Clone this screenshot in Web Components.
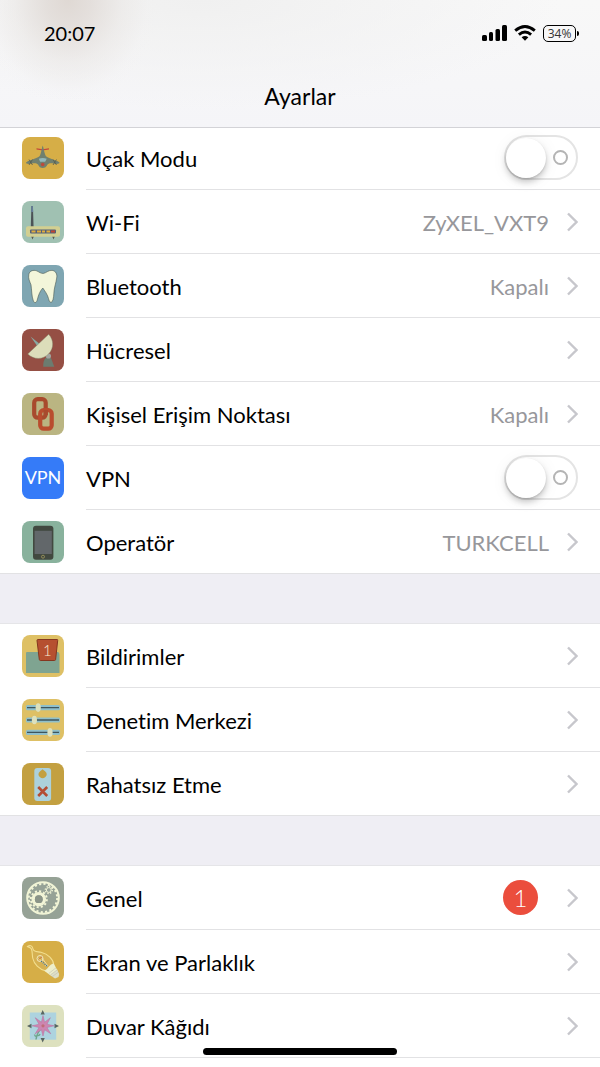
<!DOCTYPE html>
<html lang="tr">
<head>
<meta charset="utf-8">
<meta name="viewport" content="width=device-width, initial-scale=1">
<title>Ayarlar</title>
<style>
  body {
    margin: 0;
    background: #fff;
    font-family: Lato, "Open Sans", sans-serif;
    font-variant-ligatures: none;
    color: #000;
  }
</style>
</head>
<body>
<settings-page>
  <status-bar slot="header" time="20:07" battery="34"></status-bar>
  <span slot="title">Ayarlar</span>

  <settings-group>
    <switch-row icon="plane">Uçak Modu</switch-row>
    <link-row icon="router" value="ZyXEL_VXT9">Wi-Fi</link-row>
    <link-row icon="tooth" value="Kapalı">Bluetooth</link-row>
    <link-row icon="dish">Hücresel</link-row>
    <link-row icon="chain" value="Kapalı">Kişisel Erişim Noktası</link-row>
    <switch-row icon="vpn">VPN</switch-row>
    <link-row icon="phone" value="TURKCELL">Operatör</link-row>
  </settings-group>

  <settings-group>
    <link-row icon="notifications">Bildirimler</link-row>
    <link-row icon="sliders">Denetim Merkezi</link-row>
    <link-row icon="hanger">Rahatsız Etme</link-row>
  </settings-group>

  <settings-group continues>
    <link-row icon="gears" badge="1">Genel</link-row>
    <link-row icon="bulb">Ekran ve Parlaklık</link-row>
    <link-row icon="flower">Duvar Kâğıdı</link-row>
  </settings-group>
</settings-page>

<script>
const ICONS = {
  plane: `
    <rect width="42" height="42" fill="#d6ae47"/>
    <path d="M14.5 11.3 20.7 12.2 27 11.3 27 12.4 20.7 13.6 14.5 12.4Z" fill="#c4473a"/>
    <path d="M20.7 8.5C21.8 11 22 15 23.5 18.5 26 22 33 22 37.5 25.5 37.5 27 35 27.2 32 26.6 29 26 27 26 25.5 27.5 24.5 30 22.8 31 20.7 31 18.6 31 17 30 16 27.5 14.5 26 12.5 26 9.5 26.6 6.5 27.2 4 27 4 25.5 8.5 22 15.5 22 18 18.5 19.5 15 19.6 11 20.7 8.5Z" fill="#70806f"/>
    <path d="M16.8 21.8Q20.7 20 24.7 21.8L23.2 24.7H18.2Z" fill="#91b8bd"/>
    <circle cx="20.7" cy="27.5" r="1.8" fill="#bd493a"/>
    <path d="M7 22.5 10.5 28M10.5 22.5 7 28M31 22.5 34.5 28M34.5 22.5 31 28" stroke="#555b4e" stroke-width=".8"/>`,
  router: `
    <rect width="42" height="42" fill="#a0c1b2"/>
    <path d="M9.4 5h1.5l.7 21H8.8Z" fill="#4c5356"/>
    <path d="M9.4 5h1.5l.3 6h-2Z" fill="#647d98"/>
    <path d="M9 35h3l-1.5 3.5ZM30 35h3l-1.5 3.5Z" fill="#56584c"/>
    <rect x="4" y="25.3" width="34" height="10.5" rx="2" fill="#d2cf91"/>
    <rect x="8" y="28.5" width="26" height="4" rx="1" fill="#53607a"/>
    <path d="M9.5 30.5h4M15 30.5h4M20 30.5h3M24.5 30.5h3.5" stroke="#e2ae3c" stroke-width="2"/>
    <path d="M29 30.5h4" stroke="#c2452f" stroke-width="2"/>`,
  tooth: `
    <rect width="42" height="42" fill="#7fa6b2"/>
    <path d="M6.8 9.5C7.5 5.5 11.5 4.8 14.5 5.8 17 6.8 19 8.8 21.5 8.4 24 8 26.5 5 30.2 5.4 33.5 5.8 35.5 9 34.7 13 34 17.5 32.8 21 32.2 25 31.6 29 32 34 30 36.8 28.4 38.5 27 36 26.5 33.5 25.5 29.5 22.8 26 20.8 23 18 26 16.5 30 15.5 34 14.8 37.5 12.8 39 11.4 36 9.5 31 9.8 25 9 19.8 7.8 16.5 6 13.5 6.8 9.5Z" fill="#f3f6da" stroke="#4c5a52" stroke-width=".6"/>`,
  dish: `
    <rect width="42" height="42" fill="#954f44"/>
    <path d="M8.5 7.5 17.8 15 15.6 17.5Z" fill="#88aaa3"/>
    <path d="M23.5 29H29L32.3 37.7H21.2Q21 32 23.5 29Z" fill="#6c7c70"/>
    <circle cx="26.4" cy="27" r="2.6" fill="#a3a6a1"/>
    <path d="M26.7 5.3C32 11 32 19 27 24.5 21 31 12 31 5.7 25Z" fill="#dcddba" stroke="#77765d" stroke-width=".4"/>`,
  chain: `
    <rect width="42" height="42" fill="#bab582"/>
    <g fill="none" stroke-width="4.2">
      <rect x="12.2" y="6.2" width="11.5" height="18.5" rx="3.5" stroke="#a84a2d"/>
      <rect x="18.2" y="17.2" width="11.5" height="18.5" rx="3.5" stroke="#b94d2e"/>
      <path d="M23.7 17v5" stroke="#a84a2d"/>
    </g>`,
  vpn: `
    <rect width="42" height="42" fill="#357bf8"/>
    <text x="21" y="27" font-size="18" text-anchor="middle" fill="#fff">VPN</text>`,
  phone: `
    <rect width="42" height="42" fill="#89b29d"/>
    <rect x="11" y="4.8" width="20.4" height="34" rx="3" fill="#424940"/>
    <rect x="12.6" y="9.8" width="17.2" height="23.2" fill="#62676a"/>
    <circle cx="21" cy="35.7" r="1.5" fill="none" stroke="#a39c60" stroke-width=".8"/>`,
  notifications: `
    <rect width="42" height="42" fill="#dec065"/>
    <path d="M4 18Q4 17 5 17H36Q37.5 17.5 37.5 20V38H4Z" fill="#7fa491"/>
    <path d="M15.8 4.5H35.4Q35.8 4.5 35.7 5.5L33.6 24.5Q33.4 25.5 32.5 25.5H18.4Q17.5 25.5 17.3 24.5L15 5.5Q15 4.5 15.8 4.5Z" fill="#b65030" stroke="#85361f" stroke-width="1"/>
    <text x="25.3" y="20.5" font-size="15" font-weight="300" text-anchor="middle" fill="#f8ead2">1</text>`,
  sliders: `
    <rect width="42" height="42" fill="#dec065"/>
    <g fill="#8ebfca">
      <rect x="4" y="6" width="34" height="5.2" rx="1.5"/>
      <rect x="4" y="18.4" width="34" height="5.2" rx="1.5"/>
      <rect x="4" y="30.8" width="34" height="5.2" rx="1.5"/>
    </g>
    <path d="M5 8.6H37M5 21H37M5 33.4H37" stroke="#3e555c" stroke-width="1.3"/>
    <g fill="#dde1bd">
      <ellipse cx="16.2" cy="8.6" rx="2.6" ry="4.3"/>
      <ellipse cx="12.4" cy="21" rx="2.6" ry="4.3"/>
      <ellipse cx="28" cy="33.4" rx="2.6" ry="4.3"/>
    </g>`,
  hanger: `
    <rect width="42" height="42" fill="#c3a041"/>
    <rect x="12.3" y="5" width="16.8" height="33" rx="3" fill="#acd1dc"/>
    <path d="M20.6 6.2 23.3 8.4A3.9 3.9 0 1 1 17.9 8.4Z" fill="#c3a041"/>
    <path d="M16.2 24 25.2 33M25.2 24 16.2 33" stroke="#b44e34" stroke-width="2.6"/>`,
  gears: `
    <rect width="42" height="42" fill="#96a296"/>
    <g fill="none" stroke="#f1f4d6">
      <circle cx="21" cy="21" r="15.8" stroke-width="2"/>
      <circle cx="21" cy="21" r="14.2" stroke-width="2" stroke-dasharray="2.2 2.26"/>
      <circle cx="16.8" cy="22.2" r="5.6" stroke-width="3.4"/>
      <circle cx="16.8" cy="22.2" r="8" stroke-width="2" stroke-dasharray="2.1 2.09"/>
      <circle cx="26.8" cy="13" r="2.4" stroke-width="1"/>
      <circle cx="26.8" cy="13" r="3.5" stroke-width="1.4" stroke-dasharray="1.3 1.45"/>
    </g>
    <circle cx="16.8" cy="22.2" r="3.9" fill="#8a9488"/>`,
  bulb: `
    <rect width="42" height="42" fill="#d6ae47"/>
    <path d="M5.5 5.5C8.5 3.5 10.5 5 11 8 11.5 11 15 10.5 19 11.2 26 13 31.5 18 31.7 24L24 30C17 28.5 12 23 10.7 17 10 13 10.5 10.5 9.4 8 8.5 6.3 7 6.5 5.5 5.5Z" fill="#d6b152" stroke="#f3df8f" stroke-width="1.1"/>
    <circle cx="18" cy="17.5" r="3" fill="none" stroke="#f1e6bd" stroke-width="1"/>
    <path d="M16.5 17 25 26M19.5 16.5 26 25" stroke="#f0e7c2" stroke-width=".8"/>
    <path d="M19 20 25.5 25.5" stroke="#4e7484" stroke-width="1.2" stroke-dasharray="1.4 .8"/>
    <path d="M17 18l3-2" stroke="#cb754a" stroke-width="1"/>
    <path d="M31.7 22.4 35.5 29.5 28.5 34.5 22.3 29.8Q24.8 28.8 27 25.5Q28.7 22.8 31.7 22.4Z" fill="#eeeecb"/>
    <path d="M35 28.6 37.2 33 36.5 36 33 37.5 28.5 34.5Z" fill="#dedfc8"/>
    <path d="M26.8 32.5 34 26.8M28.3 34 35.4 28.8M30 35.8 36.3 31.2" stroke="#c5c5b4" stroke-width=".7"/>`,
  flower: `
    <rect width="42" height="42" fill="#dde1bf"/>
    <rect x="7.8" y="7.5" width="26.4" height="27.2" fill="#add3df"/>
    <path d="M20.7 5 22.8 9.5H18.6ZM20.7 37.5 22.8 33H18.6ZM5 21 9.5 18.8V23.2ZM37 21 32.5 18.8V23.2Z" fill="#596661"/>
    <path d="M20.5 22Q15 27 14 34.5M14.6 31.5Q12.8 31.5 12.5 29.5M15.3 30.5Q17.5 31 18 29" stroke="#6fa58c" stroke-width="1.4" fill="none"/>
    <path d="M21 10.5 22.6 17.2 28.4 12.7 25 19.2 32 20.8 25 22.5 28.8 28.8 22.6 24.8 21 31 19.4 24.8 13.2 28.8 17 22.5 10 20.8 17 19.2 13.2 12.7 19.4 17.2Z" fill="#cd86b1" stroke="#b76f9e" stroke-width=".5"/>
    <circle cx="21" cy="20.8" r="1.6" fill="#c06d79"/>`,
};

class AppIcon extends HTMLElement {
  connectedCallback() {
    this.attachShadow({ mode: 'open' }).innerHTML = `
      <style>
        :host { display: block; flex: none; width: 42px; height: 42px; border-radius: 8px; overflow: hidden; }
        svg { display: block; width: 100%; height: 100%; font-family: Lato, sans-serif; }
      </style>
      <svg viewBox="0 0 42 42" aria-hidden="true">${ICONS[this.getAttribute('name')] || ''}</svg>
    `;
  }
}

class StatusBar extends HTMLElement {
  connectedCallback() {
    this.attachShadow({ mode: 'open' }).innerHTML = `
      <style>
        :host {
          display: flex;
          align-items: center;
          justify-content: space-between;
          height: 66px;
          padding: 0 21px 0 44px;
          font-size: 20px;
        }
        .indicators { display: flex; align-items: center; gap: 7px; }
        .battery { display: flex; align-items: center; gap: 1px; }
        .level {
          box-sizing: border-box;
          width: 33px;
          height: 17px;
          border: 1px solid #000;
          border-radius: 5px;
          font-family: "Open Sans", sans-serif;
          font-size: 12px;
          line-height: 15px;
          text-align: center;
          color: #333;
        }
        .cap { width: 2px; height: 5px; border-radius: 0 2px 2px 0; background: #000; }
        svg { display: block; }
      </style>
      <time>${this.getAttribute('time')}</time>
      <div class="indicators">
        <svg width="25" height="16" viewBox="0 0 25 16" aria-hidden="true">
          <rect y="10" width="5" height="6" rx="1.5"/>
          <rect x="7" y="7" width="4" height="9" rx="1.5"/>
          <rect x="13.5" y="4" width="4.5" height="12" rx="1.5"/>
          <rect x="20" y="0" width="5" height="16" rx="1.5"/>
        </svg>
        <svg width="22" height="16" viewBox="0 0 22 16" aria-hidden="true">
          <path d="M1.2 5.6Q11-2.6 20.8 5.6M4.9 9.6Q11 4.4 17.1 9.6" fill="none" stroke="#000" stroke-width="2.9"/>
          <path d="M7.6 12.3Q11 9.7 14.4 12.3L11 15.8Z"/>
        </svg>
        <div class="battery"><div class="level">${this.getAttribute('battery')}%</div><div class="cap"></div></div>
      </div>
    `;
  }
}

class SettingsPage extends HTMLElement {
  connectedCallback() {
    this.attachShadow({ mode: 'open' }).innerHTML = `
      <style>
        :host { display: block; }
        header {
          position: sticky;
          top: 0;
          z-index: 1;
          box-sizing: border-box;
          height: 128px;
          border-bottom: 1px solid #d3d3d7;
          background:
            radial-gradient(ellipse 90px 105px at 68px 0, rgba(222, 215, 210, 0.95), rgba(224, 218, 214, 0.8) 25%, rgba(230, 226, 223, 0.4) 60%, rgba(240, 238, 238, 0.1) 88%, rgba(245, 245, 246, 0)),
            radial-gradient(ellipse 360px 110px at 200px 0, #f0f0f0, rgba(245, 245, 246, 0)),
            linear-gradient(#f8f8f8, #f5f5f8);
        }
        h1 {
          margin: 0;
          font-size: 23px;
          font-weight: 400;
          line-height: 60px;
          text-align: center;
        }
        /* the first group starts just under the bar's edge */
        main { display: flex; flex-direction: column; gap: 50px; margin-top: -2px; background: #efeef4; }
        .home {
          position: fixed;
          bottom: 12px;
          left: 50%;
          width: 194px;
          height: 7px;
          margin-left: -97px;
          border-radius: 4px;
          background: #000;
        }
      </style>
      <header>
        <slot name="header"></slot>
        <h1><slot name="title"></slot></h1>
      </header>
      <main><slot></slot></main>
      <div class="home"></div>
    `;
  }
}

class SettingsGroup extends HTMLElement {
  connectedCallback() {
    this.attachShadow({ mode: 'open' }).innerHTML = `
      <style>
        :host { display: block; background: #fff; box-shadow: 0 -1px #e5e5e8; }
        :host(:not([continues])) ::slotted(:last-child) { --line-inset: 0; }
      </style>
      <slot></slot>
    `;
  }
}

const ROW_STYLE = `
  :host { display: block; }
  .row {
    display: flex;
    align-items: center;
    height: 63px;
    padding: 0 22px;
    font-size: 22px;
    color: inherit;
    text-decoration: none;
  }
  .line { height: 1px; margin-left: var(--line-inset, 86px); background: #e2e2e4; }
  .label { flex: 1; padding: 2px 0 0 22px; }
`;

class LinkRow extends HTMLElement {
  connectedCallback() {
    const value = this.getAttribute('value');
    const badge = this.getAttribute('badge');
    this.attachShadow({ mode: 'open' }).innerHTML = `
      <style>
        ${ROW_STYLE}
        .value { padding-top: 2px; color: #97979b; }
        .badge {
          width: 35px;
          height: 35px;
          margin-right: 11px;
          border-radius: 50%;
          background: #eb4e3d;
          color: #fff;
          font-size: 24px;
          font-weight: 300;
          line-height: 35px;
          text-align: center;
        }
        .chevron { flex: none; margin-left: 18px; }
      </style>
      <a class="row" href="#">
        <app-icon name="${this.getAttribute('icon')}"></app-icon>
        <span class="label"><slot></slot></span>
        ${value ? `<span class="value">${value}</span>` : ''}
        ${badge ? `<span class="badge">${badge}</span>` : ''}
        <svg class="chevron" width="11" height="20" viewBox="0 0 11 20" aria-hidden="true">
          <path d="M1 1.5 9.5 10 1 18.5" fill="none" stroke="#c7c7cc" stroke-width="2.4"/>
        </svg>
      </a>
      <div class="line"></div>
    `;
  }
}

class SwitchRow extends HTMLElement {
  connectedCallback() {
    this.attachShadow({ mode: 'open' }).innerHTML = `
      <style>
        ${ROW_STYLE}
        input {
          appearance: none;
          display: flex;
          align-items: center;
          justify-content: space-between;
          box-sizing: border-box;
          width: 74px;
          height: 45px;
          margin: 0;
          padding: 0 8px 0 0;
          border: 2px solid #e4e4e4;
          border-radius: 23px;
          background: #fff;
        }
        input::before {
          content: "";
          width: 40px;
          height: 40px;
          border-radius: 50%;
          background: #fff;
          box-shadow: 0 4px 6px rgba(0, 0, 0, 0.2), 0 1px 2px rgba(0, 0, 0, 0.12), 0 2px 18px rgba(0, 0, 0, 0.06);
        }
        input::after {
          content: "";
          box-sizing: border-box;
          width: 15px;
          height: 15px;
          border: 2px solid #b4b4b4;
          border-radius: 50%;
        }
        input:checked { flex-direction: row-reverse; padding: 0 0 0 8px; background: #4cd964; }
      </style>
      <label class="row">
        <app-icon name="${this.getAttribute('icon')}"></app-icon>
        <span class="label"><slot></slot></span>
        <input type="checkbox" role="switch">
      </label>
      <div class="line"></div>
    `;
  }
}

customElements.define('app-icon', AppIcon);
customElements.define('status-bar', StatusBar);
customElements.define('settings-page', SettingsPage);
customElements.define('settings-group', SettingsGroup);
customElements.define('link-row', LinkRow);
customElements.define('switch-row', SwitchRow);
</script>
</body>
</html>
